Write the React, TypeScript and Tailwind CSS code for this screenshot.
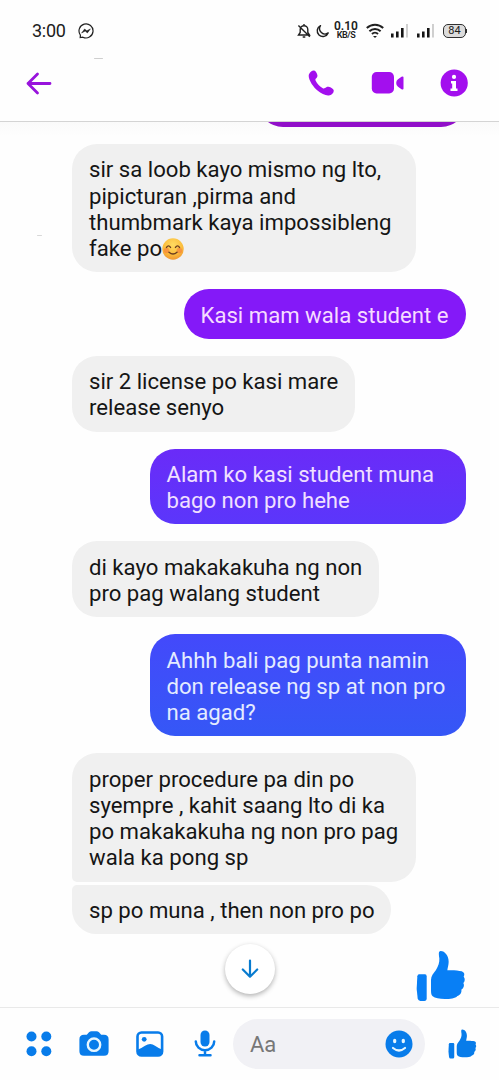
import React from 'react';
import clsx from 'clsx';

type Message = {
  id: number;
  lines: string[];
  mine?: boolean;
  emoji?: boolean;
  className?: string;
};

const messages: Message[] = [
  { id: 1, lines: ['sir sa loob kayo mismo ng lto,', 'pipicturan ,pirma and', 'thumbmark kaya impossibleng', 'fake po'], emoji: true, className: 'w-[344px] mt-[17px] text-[#151515]' },
  { id: 2, lines: ['Kasi mam wala student e'], mine: true, className: 'w-[282px] mt-[17px] bg-[#8419f8] text-[#f6dcff]' },
  { id: 3, lines: ['sir 2 license po kasi mare', 'release senyo'], className: 'w-[283px] mt-[17px] text-[#151515]' },
  { id: 4, lines: ['Alam ko kasi student muna', 'bago non pro hehe'], mine: true, className: 'w-[316px] mt-[17px] bg-linear-to-b from-[#6a2bf8] to-[#5b36fb] text-[#f1e0ff]' },
  { id: 5, lines: ['di kayo makakakuha ng non', 'pro pag walang student'], className: 'w-[307px] mt-[17px] text-[#151515]' },
  { id: 6, lines: ['Ahhh bali pag punta namin', 'don release ng sp at non pro', 'na agad?'], mine: true, className: 'w-[316px] mt-[17px] bg-linear-to-b from-[#4349fb] to-[#3557f6] text-[#e4ebff]' },
  { id: 7, lines: ['proper procedure pa din po', 'syempre , kahit saang lto di ka', 'po makakakuha ng non pro pag', 'wala ka pong sp'], className: 'w-[344px] mt-[17px] rounded-bl-[5px] text-[#151515]' },
  { id: 8, lines: ['sp po muna , then non pro po'], className: 'w-[319px] mt-[3px] rounded-tl-[5px] text-[#151515]' },
];

function Thumb({ className }: { className?: string }) {
  return (
    <svg viewBox="648 60 150 156" className={className} fill="currentColor">
      <path d="M657 133h18q5 0 5 6v66q0 8-7 8h-12q-7 0-8-8l-3-28 2-38q1-6 5-6z" />
      <path d="M722 63C735 63 746 78 746 95c0 10-3 17-4 26 14-1 33 0 43 3 8 3 10 9 6 16 5 6 4 14-1 19 4 7 1 16-6 20 2 9-4 16-12 19-6 8-22 9-37 9-17 0-30-2-37-8-4-4-5-9-5-19v-30c0-12 7-20 15-30 7-12 11-22 10-35-1-10-4-22 4-22z" />
    </svg>
  );
}

function SmileEmoji() {
  return (
    <svg viewBox="0 0 22 22" className="inline-block size-[22px] align-[-4px]" fill="none" strokeLinecap="round">
      <defs>
        <radialGradient id="face" cx=".5" cy=".3" r=".75">
          <stop offset="0" stopColor="#ffdb62" />
          <stop offset=".6" stopColor="#fbbd3c" />
          <stop offset="1" stopColor="#ee9030" />
        </radialGradient>
      </defs>
      <circle cx="11" cy="11" r="10.7" fill="url(#face)" />
      <circle cx="4.6" cy="12.5" r="2.8" fill="#f57b3d" opacity=".6" />
      <circle cx="17.4" cy="12.5" r="2.8" fill="#f57b3d" opacity=".6" />
      <path d="M4.5 9.4q2-3 4 0M13.5 9.4q2-3 4 0M7 14.3q4 3.6 8 0" stroke="#6b3d20" strokeWidth="1.4" />
    </svg>
  );
}

function Bubble({ message }: { message: Message }) {
  const { lines, mine, emoji, className } = message;
  return (
    <div
      className={clsx(
        'rounded-[25px] pt-[12.3px] pb-[10.9px] text-[22.15px] leading-[26.3px] whitespace-nowrap',
        mine ? 'self-end pl-[16.5px]' : 'self-start bg-[#f0f0f0] pl-[17px]',
        className,
      )}
    >
      {lines.map((line, i) => (
        <p key={line} className="h-[26.3px]">
          {line}
          {emoji && i === lines.length - 1 && <SmileEmoji />}
        </p>
      ))}
    </div>
  );
}

function Signal() {
  return (
    <svg viewBox="0 0 18 15" className="h-[15px] w-[18px]">
      <path d="M0 10.5h2.6v4H0zM5 8.500h2.600v6H5zM10 5h2.600v9.500H10z" fill="#151515" />
      <path d="M15.2 1h1.6v13.500h-1.6z" fill="#c4c4c4" />
    </svg>
  );
}

function StatusBar() {
  return (
    <div className="flex h-[61px] items-center pl-8 pr-8 text-[#202020]">
      <span className="w-[35px] text-[18px] leading-5 tracking-[-0.3px]">3:00</span>
      <svg viewBox="0 0 16 16" className="ml-[11px] size-4" fill="none" stroke="currentColor">
        <path d="M2.2 14.6l.2-2.5a7 7 0 1 1 2.5 2.1z" strokeWidth="1.2" />
        <path d="M3.6 10l3-4 2.2 1.8 3.6-1.9-3 4-2.2-1.8z" fill="currentColor" strokeWidth=".5" />
      </svg>
      <div className="ml-auto flex items-center">
        <svg viewBox="0 0 14 16" className="h-4 w-3.5" fill="none" stroke="currentColor" strokeWidth="1.4">
          <path d="M1.5 12h11L10.8 9.5V6.500a3.800 3.800 0 0 0-7.600 0v3zM7 1v2M5.700 14h2.600M1.400 2.600l11.400 11.200" />
        </svg>
        <svg viewBox="0 0 14 14" className="ml-[5px] mr-[4px] size-3.5" fill="none" stroke="currentColor" strokeWidth="1.4" strokeLinejoin="round">
          <path d="M4.500 1.600a5.700 5.700 0 1 0 7.700 7.300A5.400 5.400 0 0 1 4.500 1.600z" />
        </svg>
        <div className="flex w-6 flex-col items-center">
          <span className="text-[12px] leading-[10px] font-semibold">0.10</span>
          <span className="text-[9px] leading-[9px] font-semibold tracking-[-0.4px]">KB/S</span>
        </div>
        <svg viewBox="0 0 18 15" className="ml-[8px] h-[15px] w-[18px]" fill="none" stroke="currentColor" strokeWidth="2">
          <path d="M.8 5a12 12 0 0 1 16.400 0M3.400 8.200a8 8 0 0 1 11.200 0M6 11a4.300 4.300 0 0 1 6 0" />
          <path d="M7 12.900h4L9 15z" fill="currentColor" stroke="none" />
        </svg>
        <div className="ml-[7px] flex gap-2">
          <Signal />
          <Signal />
        </div>
        <div className="ml-2 flex h-[14px] w-[23px] items-center justify-center rounded-[5px] border-[1.500px] border-[#303030] bg-[#dcdcdc] text-[11px] leading-none">84</div>
        <span className="h-1 w-px bg-[#303030]" />
      </div>
    </div>
  );
}

function ChatHeader() {
  return (
    <header className="flex h-[61px] items-start border-b border-[#d4d4d4] pl-[26px] pr-[31px] pt-2 text-[#a30fee]">
      <svg viewBox="0 0 26 24" className="mt-[3px] h-6 w-[26px]" fill="none" stroke="#9813dc" strokeWidth="2.800" strokeLinecap="round" strokeLinejoin="round">
        <path d="M24 11.500H2M11.500 2L2 11.500l9.500 9.500" />
      </svg>
      <svg viewBox="0 0 26 26" className="ml-auto mt-[1px] size-[26px]" fill="currentColor">
        <path d="M1 4.200C2 1.800 4.500.2 6.100.5c1.500.3 3 2.800 3.300 4.800.2 1.600-.8 2.500-1.700 3.500-.5.7-.3 1.200 0 1.900 1.500 3 4 5.700 7.100 7.500.9.5 1.500.4 2.100-.1 1.200-1 2.200-1.700 3.700-1.400 2.300.4 4.900 2.100 5.100 3.600.3 2.300-2.100 4.900-4.800 5.200-3.200.4-7.700-1.700-11.400-4.900C5.300 17-.7 8.700 1 4.200z" />
      </svg>
      <svg viewBox="0 0 33 22" className="ml-[37px] mt-[3px] h-[22px] w-[33px]" fill="currentColor">
        <rect x=".8" y="0" width="22.200" height="21.500" rx="4.800" />
        <path d="M25.200 11q0-2.600 1.800-3.700l3.500-2.500q2-1 2 .8v10.800q0 1.800-2 .8L27 14.700q-1.800-1.100-1.800-3.700z" />
      </svg>
      <svg viewBox="0 0 28 28" className="ml-9 size-7">
        <circle cx="14.200" cy="14" r="13.600" fill="currentColor" />
        <path d="M11 12h5v7.500h1.500V22h-7v-2.500h1.700v-5H11z" fill="#fff" />
        <circle cx="14" cy="7.900" r="2.100" fill="#fff" />
      </svg>
    </header>
  );
}

function Composer() {
  return (
    <footer className="flex h-[73px] shrink-0 items-center border-t border-[#e9e9e9] pb-[1px] pl-[26px] pr-[22px] text-[#087cea]">
      <svg viewBox="0 0 26 26" className="size-[26px]" fill="currentColor">
        <circle cx="5.500" cy="5.500" r="5" />
        <circle cx="20.300" cy="5.500" r="5" />
        <circle cx="5.500" cy="20.300" r="5" />
        <circle cx="20.300" cy="20.300" r="5" />
      </svg>
      <svg viewBox="0 0 30 25" className="ml-[27px] h-[25px] w-[30px]">
        <path d="M5 3.800h2.800L10 1.300Q11 .2 12.500.2h5q1.500 0 2.500 1.100l2.200 2.500H25q4.600 0 4.600 4.600v11.800q0 4.600-4.600 4.600H5q-4.600 0-4.600-4.600V8.400Q.4 3.800 5 3.800z" fill="currentColor" />
        <circle cx="15" cy="13.700" r="6.200" fill="none" stroke="#e6f6ff" strokeWidth="2.400" />
      </svg>
      <svg viewBox="0 0 28 26" className="ml-[27px] h-[26px] w-7">
        <rect x="1.500" y="1.500" width="24.600" height="23" rx="4" fill="none" stroke="currentColor" strokeWidth="2.600" />
        <circle cx="8.200" cy="8.300" r="2.400" fill="currentColor" />
        <path d="M2 18.500q4-1.500 7-3.700 5.500-3.600 10 0Q22 17 26 18.500V22q0 3-3 3H5q-3 0-3-3z" fill="currentColor" />
      </svg>
      <svg viewBox="0 0 22 27" className="ml-[30px] h-[27px] w-[22px]" fill="none" stroke="currentColor" strokeWidth="2.500" strokeLinecap="round">
        <rect x="6.500" y=".5" width="9" height="16" rx="4.500" fill="currentColor" stroke="none" />
        <path d="M1.800 11.500a9.200 8.700 0 0 0 18.400 0M11 20.500v4.500M5.500 25.300h11" />
      </svg>
      <div className="ml-[17px] flex h-[50px] w-[192px] items-center justify-between rounded-full bg-[#f1f1f5] pl-[17px] pr-[12px]">
        <span className="pt-[2px] text-[22px] text-[#777]">Aa</span>
        <svg viewBox="0 0 28 28" className="size-7">
          <circle cx="14" cy="14" r="13.500" fill="currentColor" />
          <ellipse cx="9.700" cy="11" rx="1.700" ry="2.300" fill="#e6f6ff" />
          <ellipse cx="18.300" cy="11" rx="1.700" ry="2.300" fill="#e6f6ff" />
          <path d="M8 18q6 5 12 0" fill="none" stroke="#e6f6ff" strokeWidth="2.200" strokeLinecap="round" />
        </svg>
      </div>
      <Thumb className="ml-auto h-[30px] w-[29px]" />
    </footer>
  );
}

export default function App() {
  return (
    <div className="relative flex h-[1080px] w-[499px] flex-col overflow-hidden bg-[#fefefe] font-[Roboto,sans-serif]">
      <StatusBar />
      <ChatHeader />
      <main className="relative flex min-h-0 flex-1 flex-col overflow-hidden bg-linear-to-b from-[#fafafa] to-[#fefefe] to-[14px] pl-[72px] pr-[33px]">
        {/* previous message, scrolled under the header */}
        <div className="-mt-[45px] h-[50px] w-[208px] shrink-0 self-end rounded-full bg-[#910fc9]" />
        {messages.map(m => <Bubble key={m.id} message={m} />)}
        <Thumb className="mt-4 h-[52px] w-[50px] shrink-0 self-end text-[#087ff5]" />
        <button className="absolute left-[225px] top-[822px] flex size-[50px] items-center justify-center rounded-full bg-white shadow-[0_2px_5px_rgba(0,0,0,0.3)]">
          <svg viewBox="0 0 18 20" className="h-5 w-[18px]" fill="none" stroke="#087bcf" strokeWidth="2.200" strokeLinecap="round" strokeLinejoin="round">
            <path d="M9 1.500v16M1.800 10.500L9 17.700l7.200-7.200" />
          </svg>
        </button>
      </main>
      <Composer />
      <span className="absolute left-[94px] top-[58px] h-px w-[9px] rounded-full bg-[#cfcfcf]" />
      <span className="absolute left-[37px] top-[235px] h-px w-[5px] rounded-full bg-[#d8d8d8]" />
    </div>
  );
}
